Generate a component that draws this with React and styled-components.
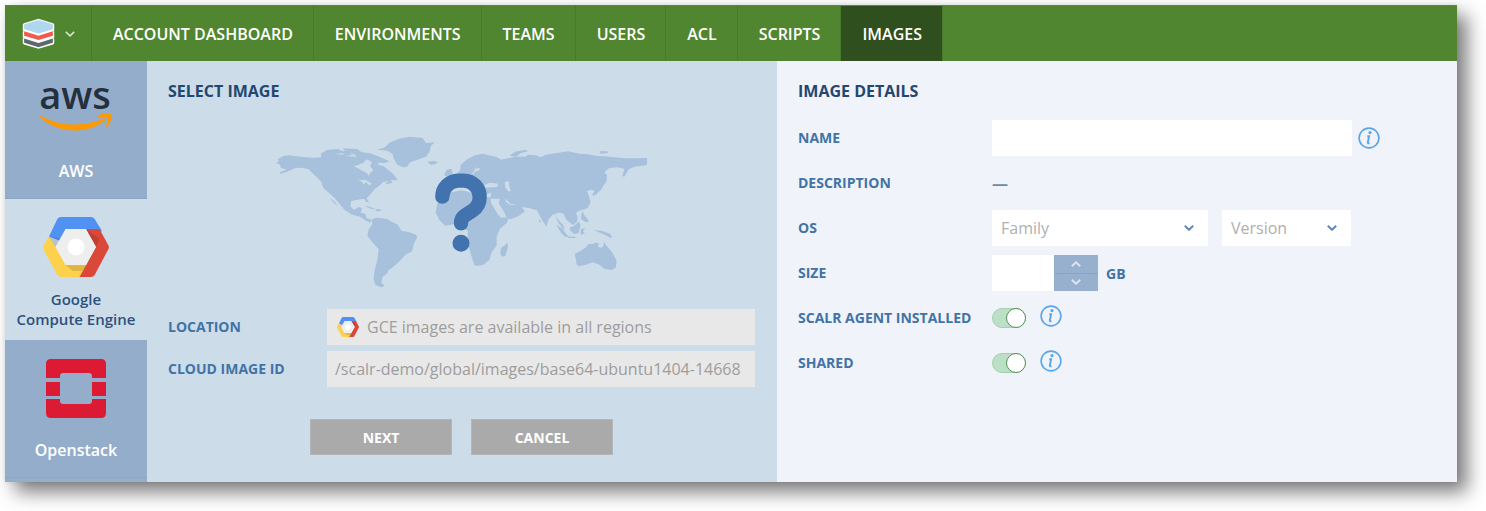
import React from "react";
import styled, { createGlobalStyle, css } from "styled-components";
import { FaQuestion } from "react-icons/fa6";

const GlobalStyle = createGlobalStyle`
  *, *::before, *::after { box-sizing: border-box; }
  body {
    margin: 0;
    background: #fff;
    color: #23476f;
    font-family: "Open Sans", "Noto Sans", sans-serif;
    font-size: 16px;
  }
  button, input, select { font: inherit; }
`;

const Page = styled.div`
  padding: 5px 29px 29px 5px;
`;

const Window = styled.div`
  box-shadow: 10px 10px 18px rgba(0, 0, 0, 0.52), 0 0 5px rgba(0, 0, 0, 0.08);
`;

const Nav = styled.nav`
  display: flex;
  height: 56px;
  background: #50862f;
  border-top: 1px solid #5f8050;
`;

const LogoButton = styled.button`
  display: flex;
  align-items: center;
  gap: 10px;
  width: 87px;
  padding: 0 0 0 17px;
  border: 0;
  border-right: 1px solid #477a2a;
  background: none;
`;

const NavLink = styled.a`
  display: flex;
  align-items: center;
  padding: 0 20px 0 21px;
  border-right: 1px solid #477a2a;
  color: #fff;
  font-weight: 600;
  text-decoration: none;
  white-space: nowrap;
  background: ${(p) => (p.$active ? "#304f1e" : "transparent")};
`;

const Body = styled.div`
  display: grid;
  grid-template-columns: 142px minmax(0, 63fr) minmax(0, 68fr);
`;

const Sidebar = styled.div`
  display: flex;
  flex-direction: column;
  background: #94adcb;
`;

const CloudTile = styled.button`
  display: flex;
  flex-direction: column;
  align-items: center;
  gap: 12px;
  padding: 18px 0 7px;
  border: 0;
  border-bottom: 1px solid #8ba6c6;
  background: none;
  color: #fff;
  font-size: 16px;
  font-weight: 600;
  line-height: 20px;
  ${(p) =>
    p.$selected &&
    css`
      padding-bottom: 10px;
      border-color: #ccdde9;
      background: #ccdde9;
      color: #2c517e;
      font-size: 15px;
    `}
`;

const TileLabel = styled.span`
  display: flex;
  align-items: center;
  height: 40px;
`;

const SelectPanel = styled.section`
  padding: 20px 22px 27px 21px;
  background: #ccdde9;
`;

const DetailsPanel = styled.section`
  padding: 20px 21px 27px;
  background: #f0f3f9;
`;

const Heading = styled.h2`
  margin: 0;
  font-size: 16px;
  font-weight: 700;
  line-height: 20px;
`;

const MapFrame = styled.div`
  display: flex;
  justify-content: center;
  margin: 35px 0 21px;
`;

const Fields = styled.div`
  display: grid;
  gap: ${(p) => p.$gap}px;
  margin-top: ${(p) => p.$top || 0}px;
`;

const Row = styled.div`
  display: grid;
  grid-template-columns: ${(p) => p.$label}px minmax(0, 1fr);
  align-items: center;
  min-height: 36px;
`;

const Label = styled.label`
  color: #4273a6;
  font-size: 14px;
  font-weight: 700;
  line-height: 20px;
`;

const Controls = styled.div`
  display: flex;
  align-items: center;
  gap: ${(p) => p.$gap || 0}px;
`;

const LockedBox = styled.div`
  display: flex;
  align-items: center;
  gap: 8px;
  height: 36px;
  padding: 0 8px;
  background: #e8e8e8;
`;

const LockedInput = styled.input`
  flex: 1;
  min-width: 0;
  padding: 0;
  border: 0;
  outline: 0;
  background: none;
  color: #9d9d9d;
`;

const IconSlot = styled.span`
  display: flex;
  padding-left: 2px;
`;

const Actions = styled.div`
  display: flex;
  justify-content: center;
  gap: 19px;
  margin-top: 32px;
`;

const ActionButton = styled.button`
  width: 142px;
  height: 36px;
  padding: 0;
  border: 1px solid #b3b6b8;
  background: #aaa;
  color: #fff;
  font-size: 14px;
  font-weight: 700;
`;

const TextInput = styled.input`
  flex: 0 1 ${(p) => p.$width}px;
  min-width: 0;
  width: ${(p) => p.$width}px;
  height: 36px;
  padding: 0 8px;
  border: 0;
  background: #fff;
`;

const SelectBox = styled.div`
  position: relative;
  flex: 0 1 ${(p) => p.$width}px;
`;

const Select = styled.select`
  appearance: none;
  width: 100%;
  height: 36px;
  padding: 0 28px 0 9px;
  border: 0;
  background: #fff;
  color: #b0b0b0;
`;

const SelectArrow = styled.span`
  position: absolute;
  top: 0;
  right: 14px;
  display: flex;
  align-items: center;
  height: 100%;
  color: #5d8abd;
  pointer-events: none;
`;

const Stepper = styled.div`
  display: grid;
  width: 44px;
  height: 36px;
  background: #97b0ce;
`;

const StepButton = styled.button`
  display: flex;
  align-items: center;
  justify-content: center;
  padding: 0;
  border: 0;
  background: none;
  color: #d9e4ef;
  & + & { border-top: 1px solid #88a4c5; }
`;

const Unit = styled.span`
  padding-left: 8px;
  color: #4273a6;
  font-size: 14px;
  font-weight: 700;
`;

const Dash = styled.span`
  color: #6b88aa;
  font-weight: 700;
`;

const Toggle = styled.input.attrs({ type: "checkbox", role: "switch" })`
  appearance: none;
  display: flex;
  justify-content: flex-end;
  width: 34px;
  height: 20px;
  margin: 0;
  border: 1px solid #a5d0b0;
  border-radius: 10px;
  background: #bbe0c5;
  &::before {
    content: "";
    width: 20px;
    height: 20px;
    margin: -1px;
    border: 1px solid #559058;
    border-radius: 50%;
    background: #fff;
  }
  &:not(:checked) { justify-content: flex-start; }
`;

const InfoButton = styled.button`
  display: flex;
  padding: 0;
  border: 0;
  background: none;
  margin-bottom: ${(p) => (p.$raised ? 4 : 0)}px;
`;

const AwsDrawing = styled.svg`
  overflow: visible;
`;

const Chevron = ({ up, width = 2 }) => (
  <svg width="10" height="6" viewBox="0 0 10 6" fill="none" stroke="currentColor" strokeWidth={width} aria-hidden="true">
    <path d={up ? "M.8 5.2 5 1.2l4.200 4" : "M.8.8 5 4.800l4.200-4"} />
  </svg>
);

const ScalrLogo = () => (
  <svg width="33" height="32" viewBox="0 0 34 32" aria-hidden="true">
    <path d="M17 .4 32 4.800q1.200.5 1.200 1.700v18.500q0 1.300-1.200 1.700L17 31.300 2 26.700Q.8 26.300.8 25V6.500Q.8 5.300 2 4.800Z" fill="#fff" />
    <path d="M17 1.500 31.800 6v5L17 15.600 2.200 11V6Z" fill="#afd8f0" />
    <path d="M2.200 13.200 17 17.700l14.800-4.500v4.600L17 22.300 2.200 17.800Z" fill="#f4594f" />
    <path d="M2.200 20.600 17 25.200l14.800-4.600v4.300L17 29.600 2.200 24.900Z" fill="#5c686e" />
    <path d="M0 12.400l2 .6-2 .7ZM34 12.400l-2 .6 2 .7ZM0 19.600l2 .6-2 .7ZM34 19.600l-2 .6 2 .7Z" fill="#50862f" />
  </svg>
);

const AwsLogo = () => (
  <AwsDrawing width="76" height="60" viewBox="0 0 76 60" role="img" aria-label="aws">
    <text x="37" y="30" textAnchor="middle" fontFamily="Open Sans" fontSize="38" fontWeight="600" fill="#252f3e">aws</text>
    <path d="M.7 36.400c.5-.8 1-.5 1.700 0C12 42 24 45.500 36 45.500c10.500 0 20.500-2 29.500-6 1.400-.6 2.500.9 1.200 1.900C58.500 48.300 46.500 51.500 36.500 51.500 22.500 51.500 10 46 .9 37.300Z" fill="#ff9900" />
    <path d="M60.500 36.500c3.500-2.500 11-2.500 12.800-1 1.500 2-1 9.500-4.600 12.300-.7.500-1.400.2-1-.7 1-2.600 2.700-7 1.900-8.200-.9-1.200-5.800-.8-8.300-.5-1 .1-1.500-1.200-.8-1.900Z" fill="#ff9900" />
  </AwsDrawing>
);

const GceLogo = ({ size }) => (
  <svg width={size * 11 / 10} height={size} viewBox="0 0 66 60" aria-hidden="true">
    <path d="M18 0h30q2.500 0 3.800 2.200L59 14 33 30 6 19.500 14.200 2.200Q15.500 0 18 0Z" fill="#5191f4" />
    <path d="M6 19.500 13 30l10 18.500H44L37 60H18q-2.500 0-3.800-2.200L.8 33Q-.5 30.500.8 28Z" fill="#fdd14b" />
    <path d="M43 12h13.500l8.700 16q1.400 2 0 4.500L51.800 57.800Q50.500 60 48 60H36.500L53 30Z" fill="#da483a" />
    <path d="m6 19.500 6.500 10.500L17 21.500ZM43 12l13.500 10L53 30ZM22 48h21l-3.500 6L30 54Z" fill="#000" opacity=".12" />
    <path d="M22.500 12H43L53 30 43 48H22.500L12.500 30Z" fill="#eee" />
    <circle cx="33" cy="30" r="8.500" fill="#fff" />
  </svg>
);

const OpenstackLogo = () => (
  <svg width="60" height="60" viewBox="0 0 60 60" fill="#dc1a33" aria-hidden="true">
    <path d="M5 1h50q5 0 5 5v14H46v-2q0-3-3-3H17q-3 0-3 3v2H0V6q0-5 5-5Z" />
    <path d="M0 24h14v14H0ZM46 24h14v14H46Z" />
    <path d="M0 41h14v2q0 3 3 3h26q3 0 3-3v-2h14v14q0 5-5 5H5q-5 0-5-5Z" />
  </svg>
);

const InfoIcon = () => (
  <svg width="22" height="22" viewBox="0 0 22 22" fill="none" stroke="#5aa6ea" aria-hidden="true">
    <circle cx="11" cy="11" r="9.900" strokeWidth="1.600" />
    <path d="M9.300 9.200h1.800l-1.300 6.300q-.2 1.200 1.700.7" strokeWidth="1.900" />
    <circle cx="12" cy="5.600" r="1.600" fill="#5aa6ea" stroke="none" />
  </svg>
);

const WorldMap = () => (
  <svg width="371" height="152" viewBox="18 18 1113 456" role="img" aria-label="No region selected">
    <g fill="#a7c0db">
      <path d="M16 97 28 94 22 88 40 78 56 76 90 80 130 83 155 82 152 71 172 59 200 58 222 64 240 58 262 61 290 72 318 78 340 86 358 94 346 99 330 97 322 104 340 108 352 118 368 130 384 151 362 150 368 158 346 163 356 152 338 157 330 166 315 176 300 194 290 205 298 218 288 215 282 206 262 209 244 213 241 229 251 239 268 231 276 235 272 248 286 251 289 264 306 270 300 278 286 271 270 260 246 254 224 240 212 226 196 206 178 190 160 174 154 156 140 141 131 133 116 118 96 113 74 115 62 121 32 132 30 127 50 119 32 113 30 104Z" />
      <path d="m152 78 10-10 18-5 22 4 10 9-18 5ZM180 62l22-6 10 5-20 5ZM218 55l42 2 10 5-20 4-26-4ZM275 67l26 3 30 12 23 11-14 6-22-6-18-10-20-4ZM282 228l18 2 16 7-14-1ZM316 238l15 0 3 5-16 1ZM180 205l10 6 14 17-10-7Z" />
      <path d="M322 59 345 52 358 38 386 26 420 20 458 24 468 39 494 37 482 49 480 62 468 80 440 90 420 97 410 111 398 112 382 104 372 88 368 72 352 62Z" />
      <path d="m472 95 20-2 12 3-8 7-14 1Z" />
      <path d="M306 268 318 263 334 265 352 267 364 275 382 283 394 302 416 306 438 314 442 322 432 340 426 364 406 374 390 392 370 410 356 420 352 430 338 440 334 458 344 468 332 472 316 464 311 448 314 420 322 390 326 358 310 340 292 318 296 298 306 284Z" />
      <path d="m522 136 8-17 14-3 4 15-16 8ZM516 168l10-14 22-7 10-14 12-12 2-17 20-16 22-12 24-5 42 10 14 8 8-2 34-7 30 0 8-6 24 2 14 6 16-8 66-10 34 7 26 2 22 4 44 3 44 5 36 0 31-1 2 14-5 8-34 4-18 8-13 22-6-2 6-22-22-4-24 3-14 12 8 8-1 18-8 12-18 12-5 18-8-14-8-2-12 4 6 16 5 18-10 18-28 9-6 6 4 9 0 15-12 11-12-8-10-9-8-18-14-2-18 6-12 14-7 22-16-25-12-24-24-7-22-3 10 13-20 15-24 9-10-4-12-24-12-18 2-16-32 0-20 14-12-16-32 4-18-2-10 8-14 1Z" />
      <path d="M526 190 550 182 580 181 590 190 604 202 634 199 660 204 665 220 684 248 693 263 717 262 710 279 690 297 680 319 680 346 665 367 658 390 638 406 614 407 604 378 592 332 594 304 576 291 556 282 526 287 508 270 497 248 502 220Z" />
      <path d="m706 344 6-6 2 12-8 28-10 2-5-10 2-16ZM807 268l6 6-3 4-4-4ZM788 280l-10-1M718 77l18-12 30-6 8 5-22 6-14 10ZM976 166l10-2 12-17 4 15-7 16-24 20-5-5 10-11-6-9Z" />
      <path d="M978 158l4-12 8-4 2-18 6 4 4 16-10 6ZM858 284l20 12 16 24-8 1-12-12ZM893 319l24 2-1 4-22-2ZM900 292l12-4 14-13 6 11-7 24-13 2-12-11ZM933 297l14-3-8 8 6 10-6-1-6 5-1-10ZM936 242l10 18 8 7 1 10-10-1-12-10ZM972 300l25 3 24 9 6 12-10-2-16-9-18-8Z" />
      <path d="M1003 333 1007 345 1016 354 1028 370 1040 392 1037 414 1023 420 1003 416 988 404 968 397 948 404 926 409 920 404 918 390 914 372 930 364 948 352 956 342 968 342 976 338 986 340 984 350 996 353 1000 347Z" />
      <path d="m850 242 12 24 18 20 4 12-4-1-16-20ZM988 64l24 0 2 5-22 2Z" />
    </g>
    <path d="m252 109 26-9 12-12 16 8-6 12 10 12-10 10-4 7-6-8-18-10ZM264 150l22-1 20 12-8 5-10-10-6 8-6-9ZM194 72l30 2-8-5ZM226 78l34 3-10-7ZM240 68l20 8-10 2ZM606 132l12-20 10-14-12 18 16-2-8 10-10 0-2 8ZM546 168l30-6 24 12 16 19-22-8-20-4-30 6ZM644 164l16-6 24 3-2 10-38 2ZM704 157l12-4 2 16 4 15-8 0-8-12ZM646 194l18-6-2 14-14 0ZM664 213l22 38 6 11-8-8-22-38ZM706 206l16 16 18 2-18 2-14-10Z" fill="#ccdde9" />
    <FaQuestion x="445" y="120" size={256} color="#4273ae" strokeWidth="22" />
  </svg>
);

const LINKS = ["ACCOUNT DASHBOARD", "ENVIRONMENTS", "TEAMS", "USERS", "ACL", "SCRIPTS", "IMAGES"];

const Info = ({ about, raised }) => (
  <InfoButton type="button" aria-label={`About ${about}`} $raised={raised}>
    <InfoIcon />
  </InfoButton>
);

const Dropdown = ({ name, width, id }) => (
  <SelectBox $width={width}>
    <Select id={id} aria-label={`OS ${name}`} defaultValue={name}>
      <option>{name}</option>
    </Select>
    <SelectArrow><Chevron /></SelectArrow>
  </SelectBox>
);

export default function App() {
  return (
    <Page>
      <GlobalStyle />
      <Window>
        <Nav>
          <LogoButton type="button" aria-label="Main menu">
            <ScalrLogo />
            <svg width="10" height="6" viewBox="0 0 10 6" fill="none" stroke="#d5e3cc" strokeWidth="1.600" aria-hidden="true">
              <path d="M.8.800 5 4.800l4.200-4" />
            </svg>
          </LogoButton>
          {LINKS.map((link) => (
            <NavLink key={link} href="#" $active={link === "IMAGES"}>{link}</NavLink>
          ))}
        </Nav>
        <Body>
          <Sidebar>
            <CloudTile type="button">
              <AwsLogo />
              <TileLabel>AWS</TileLabel>
            </CloudTile>
            <CloudTile type="button" $selected>
              <GceLogo size={60} />
              <TileLabel>Google<br />Compute Engine</TileLabel>
            </CloudTile>
            <CloudTile type="button">
              <OpenstackLogo />
              <TileLabel>Openstack</TileLabel>
            </CloudTile>
          </Sidebar>
          <SelectPanel>
            <Heading>SELECT IMAGE</Heading>
            <MapFrame><WorldMap /></MapFrame>
            <Fields $gap={6}>
              <Row $label={159}>
                <Label htmlFor="location">LOCATION</Label>
                <LockedBox>
                  <IconSlot><GceLogo size={20} /></IconSlot>
                  <LockedInput id="location" readOnly value="GCE images are available in all regions" />
                </LockedBox>
              </Row>
              <Row $label={159}>
                <Label htmlFor="image-id">CLOUD IMAGE ID</Label>
                <LockedBox>
                  <LockedInput id="image-id" readOnly value="/scalr-demo/global/images/base64-ubuntu1404-14668" />
                </LockedBox>
              </Row>
            </Fields>
            <Actions>
              <ActionButton type="button">NEXT</ActionButton>
              <ActionButton type="button">CANCEL</ActionButton>
            </Actions>
          </SelectPanel>
          <DetailsPanel>
            <Heading>IMAGE DETAILS</Heading>
            <Fields $gap={9} $top={19}>
              <Row $label={194}>
                <Label htmlFor="name">NAME</Label>
                <Controls $gap={6}>
                  <TextInput id="name" $width={360} />
                  <Info about="name" />
                </Controls>
              </Row>
              <Row $label={194}>
                <Label as="span">DESCRIPTION</Label>
                <Dash>—</Dash>
              </Row>
              <Row $label={194}>
                <Label htmlFor="os-family">OS</Label>
                <Controls $gap={14}>
                  <Dropdown id="os-family" name="Family" width={216} />
                  <Dropdown id="os-version" name="Version" width={129} />
                </Controls>
              </Row>
              <Row $label={194}>
                <Label htmlFor="size">SIZE</Label>
                <Controls>
                  <TextInput id="size" $width={62} />
                  <Stepper>
                    <StepButton type="button" aria-label="Increase size"><Chevron up /></StepButton>
                    <StepButton type="button" aria-label="Decrease size"><Chevron /></StepButton>
                  </Stepper>
                  <Unit>GB</Unit>
                </Controls>
              </Row>
              <Row $label={194}>
                <Label htmlFor="agent">SCALR AGENT INSTALLED</Label>
                <Controls $gap={14}>
                  <Toggle id="agent" defaultChecked />
                  <Info about="Scalr agent" raised />
                </Controls>
              </Row>
              <Row $label={194}>
                <Label htmlFor="shared">SHARED</Label>
                <Controls $gap={14}>
                  <Toggle id="shared" defaultChecked />
                  <Info about="sharing" raised />
                </Controls>
              </Row>
            </Fields>
          </DetailsPanel>
        </Body>
      </Window>
    </Page>
  );
}
